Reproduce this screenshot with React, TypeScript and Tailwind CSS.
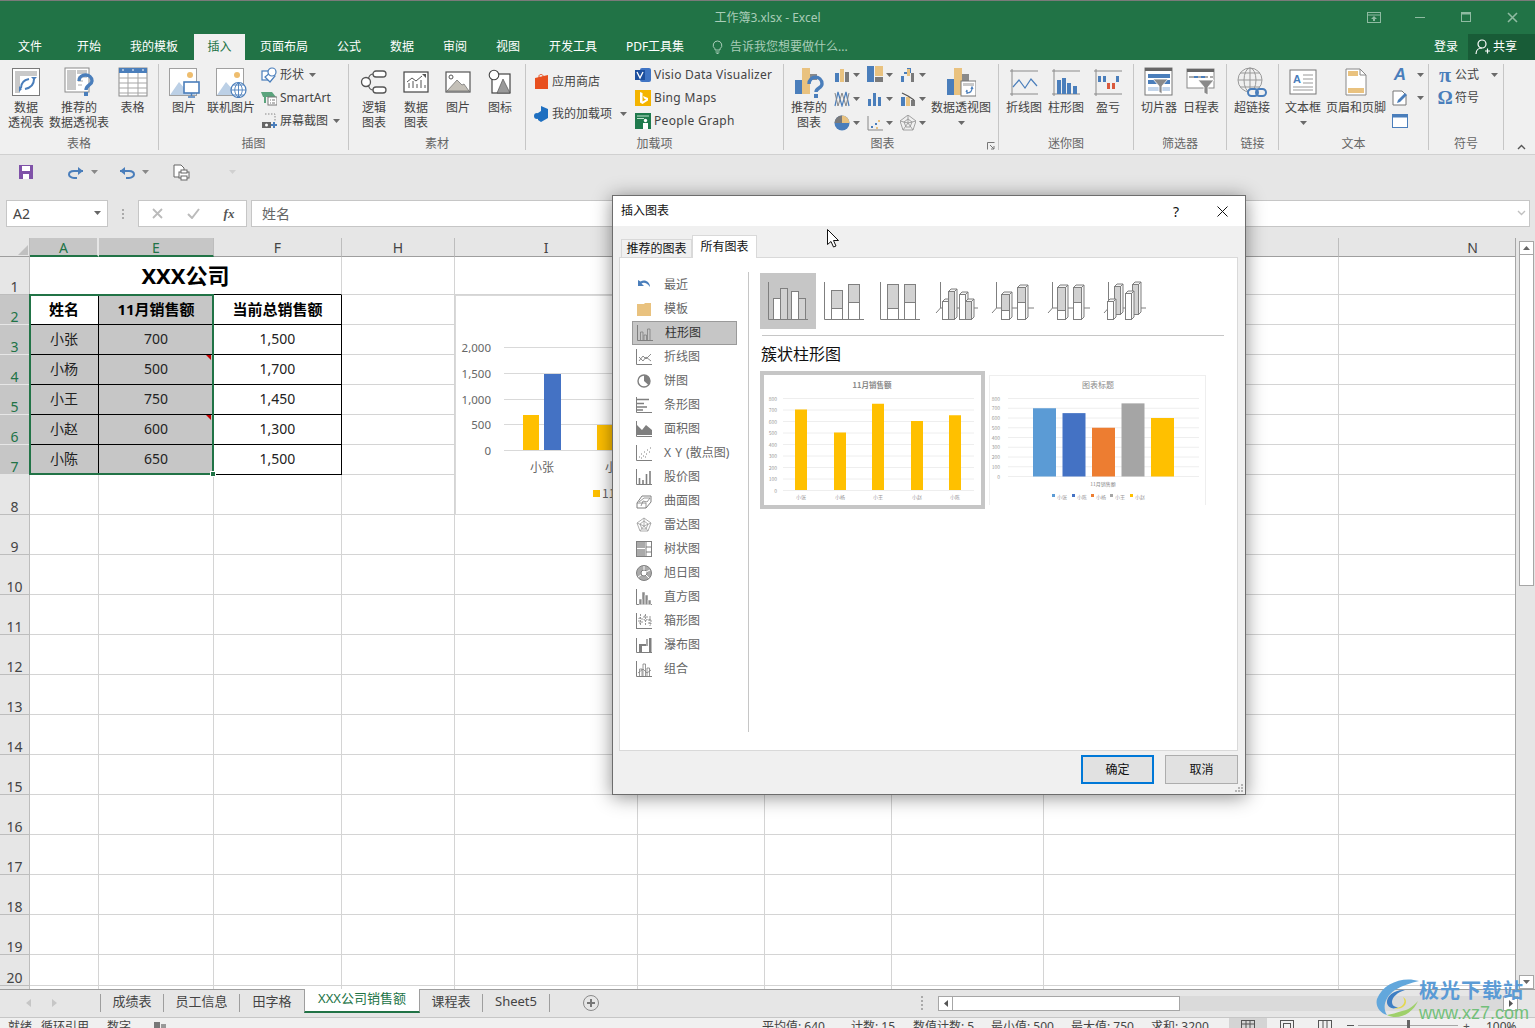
import type { ReactNode } from 'react';

const BLUE = '#4a7ebb';
const TAN = '#e9c27f';
const GRAY = '#7f7f7f';

const Caret = ({ color = '#6a6a6a' }: { color?: string }) => (
  <svg width="7" height="4" viewBox="0 0 7 4" className="shrink-0">
    <path d="M0 0h7L3.5 4z" fill={color} />
  </svg>
);

const Ico = ({ w = 16, h = 16, vb, children }: { w?: number; h?: number; vb?: string; children: ReactNode }) => (
  <svg width={w} height={h} viewBox={vb ?? `0 0 ${w} ${h}`} className="shrink-0" fill="none">
    {children}
  </svg>
);

/* ---------- ribbon: large icons ---------- */
const PivotIcon = () => (
  <Ico w={30} h={30}>
    <rect x="1.5" y="1.5" width="27" height="27" fill="#fff" stroke="#7a7a7a" />
    <rect x="4" y="4" width="22" height="5" fill="#c9c9c9" />
    <rect x="4" y="9" width="5" height="17" fill="#c9c9c9" />
    <path d="M23 12c0 6-4 9-9 10M10 21c0-5 3-8 8-9" stroke={BLUE} strokeWidth="2" />
    <path d="M20 10l3 3 3-3M8 19l3 3-3 3" fill={BLUE} />
  </Ico>
);
const RecPivotIcon = () => (
  <Ico w={30} h={30}>
    <rect x="1" y="1" width="24" height="24" fill="#fff" stroke="#8a8a8a" />
    <rect x="3" y="3" width="9" height="20" fill="#c9c9c9" />
    <rect x="13" y="3" width="10" height="4" fill="#c9c9c9" />
    <path d="M14 10h9M14 14h5M14 18h4" stroke="#aaa" />
    <path d="M15 14c0-8 13-8 13 0 0 4-6 4-6 9" stroke={BLUE} strokeWidth="3.4" />
    <rect x="20" y="25" width="4" height="4" fill={BLUE} />
  </Ico>
);
const TableIcon = () => (
  <Ico w={30} h={30}>
    <rect x="1" y="1" width="28" height="28" fill="#fff" stroke="#8a8a8a" />
    <rect x="1" y="1" width="28" height="5" fill={BLUE} />
    <path d="M1 11h28M1 16h28M1 21h28M1 26h28M10 6v23M20 6v23" stroke="#a5a5a5" />
    <path d="M4 3h2M14 3h2M24 3h2" stroke="#fff" />
  </Ico>
);
const PicBase = ({ children }: { children: ReactNode }) => (
  <Ico w={31} h={31}>
    <rect x="0.5" y="1.5" width="27" height="27" fill="#fff" stroke="#a0a0a0" />
    <circle cx="21" cy="8" r="3" fill="#eebd6e" />
    <path d="M1 28l9-13 7 8 4-4 6 9z" fill="#bcd0e6" />
    {children}
  </Ico>
);
const PictureIcon = () => (
  <PicBase>
    <rect x="15" y="15" width="15" height="11" fill="#fff" stroke={BLUE} strokeWidth="1.6" />
    <path d="M22.5 26v3M19 30h7" stroke={BLUE} strokeWidth="1.4" />
  </PicBase>
);
const OnlinePicIcon = () => (
  <PicBase>
    <circle cx="22.5" cy="23" r="7.5" fill="#fff" stroke={BLUE} strokeWidth="1.2" />
    <path d="M15 23h15M22.5 15.5v15M17 18h11M17 28h11M22.5 15.5c-5 4-5 11 0 15M22.5 15.5c5 4 5 11 0 15" stroke={BLUE} strokeWidth="0.9" />
  </PicBase>
);
const LogicIcon = () => (
  <Ico w={28} h={26}>
    <circle cx="6" cy="13" r="4.5" fill="#fff" stroke="#555" strokeWidth="1.3" />
    <rect x="13" y="2" width="13" height="6" rx="3" fill="#fff" stroke="#555" strokeWidth="1.3" />
    <rect x="13" y="18" width="13" height="6" rx="3" fill="#fff" stroke="#555" strokeWidth="1.3" />
    <path d="M13 5c-4 0-4 4-5 5M13 21c-4 0-4-4-5-5" stroke="#555" strokeWidth="1.2" />
  </Ico>
);
const DataChartIcon = () => (
  <Ico w={26} h={22}>
    <rect x="1" y="1" width="24" height="20" fill="#fff" stroke="#444" strokeWidth="1.2" />
    <path d="M6 17v-5M10 17v-7M14 17v-4M18 17V9M22 17v-3" stroke="#555" />
    <path d="M4 11l5-4 4 3 6-5" stroke="#555" />
    <path d="M19 3h4v4z" fill="#555" />
  </Ico>
);
const MatPicIcon = () => (
  <Ico w={26} h={22}>
    <rect x="1" y="1" width="24" height="20" fill="#fff" stroke="#555" strokeWidth="1.2" />
    <circle cx="6" cy="6" r="2" fill="#fff" stroke="#555" />
    <path d="M2 20l10-11 5 5 2-1 5 7z" fill="#c4c0b8" stroke="#555" strokeWidth="0.6" />
  </Ico>
);
const MatIconIcon = () => (
  <Ico w={24} h={27}>
    <rect x="4" y="5" width="18" height="19" fill="#fff" stroke="#444" strokeWidth="1.2" />
    <circle cx="6" cy="6" r="4.8" fill="#fff" stroke="#444" strokeWidth="1.1" />
    <path d="M15 10l7 14H9z" fill="#999" stroke="#444" strokeWidth="0.6" />
  </Ico>
);
const RecChartIcon = () => (
  <Ico w={30} h={32}>
    <rect x="1" y="14" width="7" height="14" fill={BLUE} />
    <rect x="8" y="2" width="8" height="26" fill={TAN} />
    <rect x="16" y="8" width="7" height="6" fill="#8a8a8a" />
    <path d="M15 18c0-9 13-9 13 0 0 4-6 4-6 8" stroke={BLUE} strokeWidth="3.4" />
    <rect x="20" y="28" width="4" height="4" fill={BLUE} />
  </Ico>
);
const PivotChartIcon = () => (
  <Ico w={30} h={30}>
    <rect x="1" y="12" width="7" height="16" fill={BLUE} />
    <rect x="8" y="1" width="8" height="27" fill={TAN} />
    <rect x="16" y="7" width="7" height="9" fill="#8a8a8a" />
    <rect x="15" y="14" width="15" height="15" fill="#fff" stroke="#777" />
    <rect x="17" y="16" width="11" height="3" fill="#c9c9c9" />
    <path d="M26 21c0 3-2 5-5 5M20 25l1-2v4M25 22l1-2 1 2" stroke={BLUE} strokeWidth="1.2" />
  </Ico>
);
const SparkBase = ({ children }: { children: ReactNode }) => (
  <Ico w={30} h={27}>
    <path d="M1 2h28M1 25h28M3 0v27" stroke="#8a8a8a" />
    {children}
  </Ico>
);
const SparkLine = () => (
  <SparkBase>
    <path d="M4 18l6-7 6 8 6-9 6 7" stroke={BLUE} strokeWidth="1.2" />
  </SparkBase>
);
const SparkBars = () => (
  <SparkBase>
    <path d="M6 11h4v14H6zM11 9h4v16h-4zM16 14h4v11h-4zM22 17h4v8h-4z" fill={BLUE} />
  </SparkBase>
);
const SparkWin = () => (
  <SparkBase>
    <path d="M5 7h3v6H5zM10 7h3v6h-3zM23 7h3v6h-3z" fill={BLUE} />
    <path d="M14 14h3v6h-3zM19 14h3v6h-3z" fill="#d9593c" />
  </SparkBase>
);
const SlicerIcon = () => (
  <Ico w={30} h={30}>
    <rect x="1" y="1" width="27" height="27" fill="#fff" stroke="#777" />
    <rect x="1" y="1" width="27" height="3" fill="#666" />
    <rect x="4" y="7" width="22" height="4" fill={BLUE} />
    <rect x="4" y="13" width="22" height="4" fill={BLUE} />
    <rect x="4" y="20" width="22" height="4" fill="#c3d5ea" />
    <path d="M9 12h15l-6 7v8l-3-2v-6z" fill="#8a8a8a" stroke="#fff" strokeWidth="0.8" />
  </Ico>
);
const TimelineIcon = () => (
  <Ico w={30} h={28}>
    <rect x="1" y="1" width="27" height="19" fill="#fff" stroke="#888" />
    <rect x="1" y="1" width="27" height="3" fill="#666" />
    <path d="M3 9h5M11 9h4M18 9h4M24 9h3" stroke="#aaa" strokeWidth="2" />
    <path d="M8 9h4M15 9h4" stroke={BLUE} strokeWidth="2" />
    <path d="M12 12h16l-6 7v8l-4-2v-6z" fill="#8a8a8a" stroke="#fff" strokeWidth="0.8" />
  </Ico>
);
const LinkIcon = () => (
  <Ico w={32} h={31}>
    <circle cx="14" cy="13" r="12" stroke="#999" />
    <ellipse cx="14" cy="13" rx="6" ry="12" stroke="#999" />
    <path d="M2 13h24M4 6h20M4 20h20M14 1v24" stroke="#999" />
    <rect x="12" y="22" width="10" height="7" rx="3.5" stroke={BLUE} strokeWidth="2" fill="#f0f0f0" />
    <rect x="20" y="22" width="10" height="7" rx="3.5" stroke={BLUE} strokeWidth="2" />
  </Ico>
);
const TextBoxIcon = () => (
  <Ico w={28} h={26}>
    <rect x="1" y="1" width="26" height="24" fill="#fff" stroke="#777" />
    <path d="M14 6h10M14 10h10M14 14h10M4 18h20M4 21h20" stroke="#999" />
    <text x="4" y="14" fontSize="11" fontWeight="700" fill={BLUE} fontFamily="Liberation Sans, sans-serif">A</text>
  </Ico>
);
const HeaderFooterIcon = () => (
  <Ico w={22} h={28}>
    <path d="M1 1h14l6 6v20H1z" fill="#fff" stroke="#888" />
    <path d="M15 1v6h6" stroke="#888" />
    <rect x="3" y="3" width="10" height="5" fill={TAN} />
    <rect x="3" y="20" width="16" height="5" fill={TAN} />
  </Ico>
);

/* ---------- ribbon: small icons ---------- */
const ShapeIcon = () => (
  <Ico>
    <rect x="1" y="4" width="9" height="9" fill="#fff" stroke={BLUE} strokeWidth="1.2" />
    <path d="M10 5l4 4-5 6-5-5z" fill="#fff" stroke={BLUE} strokeWidth="1.2" />
    <circle cx="11" cy="5" r="4" fill="#fff" stroke={BLUE} strokeWidth="1.2" />
  </Ico>
);
const SmartArtIcon = () => (
  <Ico>
    <path d="M0 2h11l4 5H2z" fill="#5aa37c" />
    <rect x="7" y="7" width="9" height="8" fill="#fff" stroke="#777" />
    <path d="M9 10h1M11 10h3M9 13h1M11 13h3" stroke="#777" />
    <path d="M3 7v6h2V7z" fill="#5aa37c" />
  </Ico>
);
const ScreenshotIcon = () => (
  <Ico>
    <path d="M4 1h10v7" stroke="#888" strokeDasharray="1.5 1.5" />
    <path d="M1 9h9v6H1z" fill="#666" />
    <circle cx="5.5" cy="12" r="1.5" fill="#fff" />
    <path d="M13 9v6M10 12h6" stroke={BLUE} strokeWidth="2" />
  </Ico>
);
const StoreIcon = () => (
  <Ico w={15} h={16}>
    <path d="M1 4l13-3v14H1z" fill="#e8501f" />
    <path d="M5 5V2c0-2 4-2 4 0v3" stroke="#e8501f" />
  </Ico>
);
const AddinIcon = () => (
  <Ico w={15} h={16}>
    <path d="M7 0l7 3v9l-7 4-3-2V7L7 5z" fill="#1e6fc0" />
    <circle cx="3" cy="10" r="3" fill="#1e6fc0" />
  </Ico>
);
const VisioIcon = () => (
  <Ico>
    <rect x="5" y="1" width="11" height="14" rx="2" fill="#3f74c4" />
    <rect x="0" y="3" width="10" height="10" fill="#1d4f9e" />
    <path d="M2 5l3 6 3-6" stroke="#fff" strokeWidth="1.3" />
  </Ico>
);
const BingIcon = () => (
  <Ico>
    <rect width="16" height="16" fill="#f4b400" />
    <path d="M5 2l2.5 1v8.5L11 9.5 9 8.5 8 6l5 2v2.5L7.5 14 5 12.5z" fill="#fff" />
  </Ico>
);
const PeopleIcon = () => (
  <Ico>
    <rect width="16" height="16" fill="#1f7a4d" />
    <path d="M2 3h12M2 5.5h7" stroke="#bfe3cf" />
    <circle cx="10.5" cy="7.5" r="1.7" fill="#fff" />
    <path d="M8 10h5v6H8z" fill="#fff" />
  </Ico>
);
const MiniColumn = () => (
  <Ico>
    <path d="M1 6h4v9H1z" fill={BLUE} />
    <path d="M6 2h4v13H6z" fill={TAN} />
    <path d="M11 5h4v10h-4z" fill="#7a7a7a" />
  </Ico>
);
const MiniTree = () => (
  <Ico w={16} h={17}>
    <rect width="7" height="16" fill={BLUE} />
    <rect x="8" width="8" height="10" fill={TAN} />
    <rect x="8" y="11" width="8" height="5" fill="#7a7a7a" />
  </Ico>
);
const MiniWater = () => (
  <Ico>
    <path d="M1 9h3v6H1z" fill={BLUE} />
    <path d="M4 5h3v2H4zM7 1h4v5H7z" fill={BLUE} />
    <path d="M11 6h3v9h-3z" fill="#7a7a7a" />
    <path d="M7 2h3v7H7z" fill={TAN} />
  </Ico>
);
const MiniLine = () => (
  <Ico>
    <path d="M1 15L4 1l4 14 4-14 3 14" stroke={BLUE} strokeWidth="1.2" />
    <path d="M1 2l3 13 4-13 4 13 3-13" stroke="#888" strokeWidth="1" />
  </Ico>
);
const MiniStat = () => (
  <Ico>
    <path d="M1 8h3v7H1zM6 2h3v13H6zM11 6h3v9h-3z" fill={BLUE} />
  </Ico>
);
const MiniCombo = () => (
  <Ico>
    <path d="M1 6h4v9H1z" fill={BLUE} />
    <path d="M6 6h4v9H6z" fill={TAN} />
    <path d="M11 9h4v6h-4z" fill="#7a7a7a" />
    <path d="M2 2l6 3 6 4" stroke="#555" strokeWidth="1.2" />
  </Ico>
);
const MiniPie = () => (
  <Ico>
    <circle cx="8" cy="8" r="7.5" fill={BLUE} />
    <path d="M8 8V.5A7.5 7.5 0 0 1 15.5 8z" fill={TAN} />
    <path d="M8 8H.5A7.5 7.5 0 0 1 8 .5z" fill="#7a7a7a" />
  </Ico>
);
const MiniScatter = () => (
  <Ico>
    <path d="M1 1v14h15" stroke="#888" />
    <path d="M4 11h2v2H4zM8 8h2v2H8z" fill={BLUE} />
    <path d="M11 5h2v2h-2zM9 12h2v2H9z" fill={TAN} />
  </Ico>
);
const MiniRadar = () => (
  <Ico>
    <path d="M8 0l8 6-3 9H3L0 6zM8 4l4 3-2 5H6L4 7zM8 0v8M0 6l8 2 8-2M3 15l5-7 5 7" stroke="#999" strokeWidth="0.9" />
  </Ico>
);
const WordArtIcon = () => (
  <span className="w-[16px] text-center font-['Liberation_Sans'] italic font-bold text-[17px] leading-[16px] text-[#4a7ebb]">A</span>
);
const SignIcon = () => (
  <Ico>
    <path d="M1 1h9l4 4v10H1z" fill="#fff" stroke="#777" />
    <path d="M5 13l1-3 7-7 2 2-7 7z" fill={BLUE} />
  </Ico>
);
const ObjectIcon = () => (
  <Ico>
    <rect x="0.5" y="1.5" width="15" height="13" fill="#fff" stroke={BLUE} />
    <rect x="0.5" y="1.5" width="15" height="3" fill={BLUE} />
  </Ico>
);

/* ---------- ribbon helpers ---------- */
const Big = ({ w, icon, lines, caret }: { w: string; icon: ReactNode; lines: string[]; caret?: boolean }) => (
  <div className={`flex flex-col items-center shrink-0 ${w}`}>
    <div className="h-[36px] flex items-center justify-center">{icon}</div>
    {lines.map((l) => (
      <div key={l} className="h-[15px] leading-[15px] whitespace-nowrap">{l}</div>
    ))}
    {caret && <div className="h-[15px] flex items-center"><Caret /></div>}
  </div>
);

const Small = ({ icon, label, caret, gap = 'gap-[3px]' }: { icon: ReactNode; label?: ReactNode; caret?: string; gap?: string }) => (
  <div className={`h-[23px] flex items-center whitespace-nowrap ${gap}`}>
    {icon}
    {label && <span>{label}</span>}
    {caret && <span className={caret}><Caret /></span>}
  </div>
);

const Group = ({ w, label, labelClass = '', children, after }: { w: string; label: string; labelClass?: string; children: ReactNode; after?: ReactNode }) => (
  <div className={`mt-[4px] h-[86px] shrink-0 flex flex-col border-r border-[#c6c6c6] ${w}`}>
    <div className="h-[72px] flex">{children}</div>
    <div className="h-[14px] flex items-center justify-between pt-px">
      <div className={`flex-1 leading-[14px] text-center text-[#666] ${labelClass}`}>{label}</div>
      {after}
    </div>
  </div>
);

const tabs = [
  { t: '文件', c: 'w-[60px]' },
  { t: '开始', c: 'w-[58px]' },
  { t: '我的模板', c: 'w-[72px]' },
  { t: '插入', c: 'w-[51px] ml-[4px] bg-[#f0f0f0] text-[#217346]' },
  { t: '页面布局', c: 'w-[78px]' },
  { t: '公式', c: 'w-[52px]' },
  { t: '数据', c: 'w-[54px]' },
  { t: '审阅', c: 'w-[52px]' },
  { t: '视图', c: 'w-[54px]' },
  { t: '开发工具', c: 'w-[76px]' },
  { t: 'PDF工具集', c: 'w-[88px]' },
];

const TitleBar = () => (
  <div className="h-[34px] bg-[#217346] border-t border-[#7a7a7a] flex items-center shrink-0">
    <div className="flex-1" />
    <div className="text-[12px] text-[#a9cdb8]">工作簿3.xlsx - Excel</div>
    <div className="flex-1 flex justify-end">
      <div className="w-[46px] flex justify-center">
        <Ico w={14} h={11}>
          <rect x="0.5" y="0.5" width="13" height="10" stroke="#8fbba2" />
          <path d="M0 3h14" stroke="#8fbba2" />
          <path d="M7 4l3 3H8v2H6V7H4z" fill="#8fbba2" />
        </Ico>
      </div>
      <div className="w-[46px] flex justify-center items-center">
        <div className="w-[10px] h-[1px] bg-[#8fbba2]" />
      </div>
      <div className="w-[46px] flex justify-center">
        <Ico w={11} h={11}>
          <rect x="0.5" y="0.5" width="9" height="9" stroke="#8fbba2" />
          <path d="M0 1.5h10" stroke="#8fbba2" strokeWidth="2" />
        </Ico>
      </div>
      <div className="w-[46px] flex justify-center">
        <Ico w={11} h={11}>
          <path d="M1 1l9 9M10 1l-9 9" stroke="#8fbba2" strokeWidth="1.6" />
        </Ico>
      </div>
    </div>
  </div>
);

const TabBar = () => (
  <div className="h-[26px] bg-[#217346] flex items-stretch shrink-0 text-[12px] text-white">
    {tabs.map((t) => (
      <div key={t.t} className={`flex items-center justify-center ${t.c}`}>{t.t}</div>
    ))}
    <div className="ml-[13px] flex items-center gap-[7px] text-[#a9cdb8]">
      <Ico w={11} h={14}>
        <path d="M5.5 1a4.3 4.3 0 0 0-2.5 7.8V10h5V8.8A4.3 4.3 0 0 0 5.5 1zM3.5 12h4M4.5 13.5h2" stroke="#a9cdb8" />
      </Ico>
      告诉我您想要做什么...
    </div>
    <div className="flex-1" />
    <div className="w-[60px] flex items-center pl-[26px]">登录</div>
    <div className="w-[67px] bg-[#185c37] flex items-center gap-[3px] pl-[7px]">
      <Ico w={15} h={16}>
        <circle cx="7" cy="5" r="4" stroke="#fff" strokeWidth="1.2" />
        <path d="M1 15c0-4 3-6 6-6M10 12h5M12.5 9.500v5" stroke="#fff" strokeWidth="1.2" />
      </Ico>
      共享
    </div>
  </div>
);

const Ribbon = () => (
  <div className="h-[95px] bg-[#f0f0f0] border-b border-[#d0d0d0] flex shrink-0 text-[12px] text-[#444]">
    <Group w="w-[159px]" label="表格">
      <Big w="w-[52px]" icon={<PivotIcon />} lines={['数据', '透视表']} />
      <Big w="w-[54px]" icon={<RecPivotIcon />} lines={['推荐的', '数据透视表']} />
      <Big w="w-[53px]" icon={<TableIcon />} lines={['表格']} />
    </Group>
    <Group w="w-[190px]" label="插图">
      <Big w="w-[50px]" icon={<PictureIcon />} lines={['图片']} />
      <Big w="w-[44px]" icon={<OnlinePicIcon />} lines={['联机图片']} />
      <div className="ml-[8px] -mt-px">
        <Small icon={<ShapeIcon />} label="形状" caret="ml-[2px]" />
        <Small icon={<SmartArtIcon />} label="SmartArt" />
        <Small icon={<ScreenshotIcon />} label="屏幕截图" caret="ml-[2px]" />
      </div>
    </Group>
    <Group w="w-[177px]" label="素材">
      <div className="w-[4px]" />
      <Big w="w-[42px]" icon={<LogicIcon />} lines={['逻辑', '图表']} />
      <Big w="w-[42px]" icon={<DataChartIcon />} lines={['数据', '图表']} />
      <Big w="w-[42px]" icon={<MatPicIcon />} lines={['图片']} />
      <Big w="w-[42px]" icon={<MatIconIcon />} lines={['图标']} />
    </Group>
    <Group w="w-[258px]" label="加载项">
      <div className="w-[109px] pl-[8px] pt-[6px] shrink-0">
        <Small icon={<StoreIcon />} label="应用商店" />
        <div className="h-[9px]" />
        <Small icon={<AddinIcon />} label="我的加载项" caret="ml-[5px]" />
      </div>
      <div className="-mt-px">
        <Small icon={<VisioIcon />} label={<span className="tracking-[0.25px]">Visio Data Visualizer</span>} />
        <Small icon={<BingIcon />} label={<span className="tracking-[0.35px]">Bing Maps</span>} />
        <Small icon={<PeopleIcon />} label={<span className="tracking-[0.35px]">People Graph</span>} />
      </div>
    </Group>
    <Group
      w="w-[215px]"
      label="图表"
      labelClass="pr-[6px]"
      after={
        <div className="mr-[3px] mt-[4px]">
          <Ico w={8} h={8}><path d="M.5 7.500v-7h7M3 3l4 4M7 4v3H4" stroke="#777" /></Ico>
        </div>
      }
    >
      <Big w="w-[50px]" icon={<RecChartIcon />} lines={['推荐的', '图表']} />
      <div className="grid grid-cols-[33px_33px_33px] -mt-px shrink-0">
        <Small icon={<MiniColumn />} caret="ml-0" />
        <Small icon={<MiniTree />} caret="ml-0" />
        <Small icon={<MiniWater />} caret="ml-0" />
        <Small icon={<MiniLine />} caret="ml-0" />
        <Small icon={<MiniStat />} caret="ml-0" />
        <Small icon={<MiniCombo />} caret="ml-0" />
        <Small icon={<MiniPie />} caret="ml-0" />
        <Small icon={<MiniScatter />} caret="ml-0" />
        <Small icon={<MiniRadar />} caret="ml-0" />
      </div>
      <Big w="w-[56px]" icon={<PivotChartIcon />} lines={['数据透视图']} caret />
    </Group>
    <Group w="w-[135px]" label="迷你图">
      <div className="w-[4px]" />
      <Big w="w-[42px]" icon={<SparkLine />} lines={['折线图']} />
      <Big w="w-[42px]" icon={<SparkBars />} lines={['柱形图']} />
      <Big w="w-[42px]" icon={<SparkWin />} lines={['盈亏']} />
    </Group>
    <Group w="w-[93px]" label="筛选器">
      <div className="w-[4px]" />
      <Big w="w-[42px]" icon={<SlicerIcon />} lines={['切片器']} />
      <Big w="w-[42px]" icon={<TimelineIcon />} lines={['日程表']} />
    </Group>
    <Group w="w-[52px]" label="链接">
      <Big w="w-[50px]" icon={<LinkIcon />} lines={['超链接']} />
    </Group>
    <Group w="w-[150px]" label="文本">
      <Big w="w-[48px]" icon={<TextBoxIcon />} lines={['文本框']} caret />
      <Big w="w-[58px]" icon={<HeaderFooterIcon />} lines={['页眉和页脚']} />
      <div className="ml-[7px] -mt-px">
        <Small icon={<WordArtIcon />} caret="ml-[6px]" />
        <Small icon={<SignIcon />} caret="ml-[6px]" />
        <Small icon={<ObjectIcon />} />
      </div>
    </Group>
    <Group w="w-[75px]" label="符号">
      <div className="pl-[8px] -mt-px">
        <Small gap="gap-[2px]" icon={<span className="w-[16px] text-center font-['Liberation_Serif'] font-bold text-[22px] leading-[16px] text-[#4a7ebb]">π</span>} label="公式" caret="ml-[10px]" />
        <Small gap="gap-[2px]" icon={<span className="w-[16px] text-center font-['Liberation_Serif'] font-bold text-[19px] leading-[16px] text-[#4a7ebb]">Ω</span>} label="符号" />
      </div>
    </Group>
    <div className="flex-1 flex justify-end items-end pb-[4px] pr-[9px]">
      <Ico w={9} h={6}>
        <path d="M1 5l3.500-3.500L8 5" stroke="#555" strokeWidth="1.4" />
      </Ico>
    </div>
  </div>
);

const QuickBar = () => (
  <div className="h-[43px] flex items-center shrink-0 pl-[19px] pb-[9px]">
    <Ico w={14} h={14}>
      <path d="M0 0h14v14H0z" fill="#7f52a8" />
      <rect x="3" y="1" width="8" height="5" fill="#fff" />
      <rect x="4" y="9" width="6" height="5" fill="#fff" />
    </Ico>
    <div className="ml-[35px] flex">
      <Ico w={16} h={13}>
        <path d="M15 5H6C2 5 1 7 1 8.500S3 12 6 12h3" stroke={BLUE} strokeWidth="2" />
        <path d="M10 1l5 4-5 4z" fill={BLUE} />
      </Ico>
    </div>
    <div className="ml-[7px] flex"><Caret color="#888" /></div>
    <div className="ml-[21px] flex">
      <Ico w={16} h={13}>
        <path d="M1 5h9c4 0 5 2 5 3.500S13 12 10 12H7" stroke={BLUE} strokeWidth="2" />
        <path d="M6 1L1 5l5 4z" fill={BLUE} />
      </Ico>
    </div>
    <div className="ml-[7px] flex"><Caret color="#888" /></div>
    <div className="ml-[24px] flex">
      <Ico w={17} h={17}>
        <path d="M1 1h7l3 3v9H1z" fill="#fff" stroke="#666" />
        <rect x="6" y="8" width="10" height="6" fill="#fff" stroke="#666" />
        <rect x="8" y="6" width="6" height="3" fill="#fff" stroke="#666" />
        <rect x="8" y="12" width="6" height="4" fill="#fff" stroke="#666" />
      </Ico>
    </div>
    <div className="ml-[39px] flex"><Caret color="#d0d0d0" /></div>
  </div>
);

const FormulaBar = () => (
  <div className="h-[27px] mt-[2px] flex shrink-0 pl-[6px] text-[14px] text-[#444]">
    <div className="w-[102px] bg-white border border-[#c6c6c6] flex items-center justify-between pl-[6px] pr-[6px] pb-px">
      A2
      <Caret color="#666" />
    </div>
    <div className="w-[30px] flex items-center justify-center">
      <div className="w-[2px] h-[10px] border-l-2 border-dotted border-[#aaa]" />
    </div>
    <div className="w-[109px] bg-white border border-[#c6c6c6] flex items-center">
      <div className="w-[36px] flex justify-center">
        <Ico w={11} h={11}><path d="M1 1l9 9M10 1l-9 9" stroke="#bbb" strokeWidth="1.8" /></Ico>
      </div>
      <div className="w-[37px] flex justify-center">
        <Ico w={13} h={11}><path d="M1 6l4 4 7-9" stroke="#bbb" strokeWidth="2" /></Ico>
      </div>
      <div className="w-[34px] text-center font-['Liberation_Serif'] italic font-bold text-[13px] text-[#555]">fx</div>
    </div>
    <div className="w-[1279px] ml-[4px] bg-white border border-[#c6c6c6] flex items-center justify-between pl-[10px] pr-[3px] pb-px text-[#666]">
      姓名
      <Ico w={9} h={6}><path d="M1 1l3.500 3.500L8 1" stroke="#c0c0c0" strokeWidth="1.4" /></Ico>
    </div>
  </div>
);

/* ---------- sheet ---------- */
const columns = [
  { k: 'A', sel: true, c: 'border-r-2 border-r-[#e6e6e6] text-[#217346] bg-[#c6c6c6] border-b-2 border-b-[#217346]' },
  { k: 'E', sel: true, c: 'text-[#217346] bg-[#c6c6c6] border-b-2 border-b-[#217346]' },
  { k: 'F', sel: false, c: '' },
  { k: 'H', sel: false, c: '' },
  { k: 'I', sel: false, c: '' },
  { k: 'J', sel: false, c: '' },
  { k: 'K', sel: false, c: '' },
  { k: 'L', sel: false, c: '' },
  { k: 'M', sel: false, c: '' },
  { k: 'N', sel: false, c: 'justify-end pr-[37px]' },
];

const people = [
  ['小张', '700', '1,500'],
  ['小杨', '500', '1,700'],
  ['小王', '750', '1,450'],
  ['小赵', '600', '1,300'],
  ['小陈', '650', '1,500'],
];

const Blank = () => <div className="border-r border-b border-[#d4d4d4]" />;

const RowHead = ({ n, sel }: { n?: number; sel?: boolean }) => (
  <div className={`border-b border-r flex items-end justify-center text-[14px] leading-[14px] ${sel ? 'bg-[#c6c6c6] text-[#217346] border-b-[#e6e6e6] border-r-[#217346]' : 'bg-[#e6e6e6] text-[#444] border-[#bdbdbd]'}`}>
    {n}
  </div>
);

const blanksAfterF = [0, 1, 2, 3, 4, 5, 6];

const Sheet = () => (
  <div className="relative w-[1516px] h-[751px] overflow-hidden border-r border-[#a6a6a6]">
    <div className="grid grid-cols-[30px_69px_115px_128px_113px_183px_127px_127px_152px_295px_177px] grid-rows-[19px_38px_repeat(6,30px)_repeat(12,40px)_31px_10px] h-full bg-white">
      <div className="bg-[#e6e6e6] border-b border-[#9e9e9e] border-r border-r-[#bdbdbd] flex items-end justify-end">
        <Ico w={12} h={12}><path d="M11 1v10H1z" fill="#c0c0c0" /></Ico>
      </div>
      {columns.map((c) => (
        <div key={c.k} className={`flex items-center justify-center pt-[2px] text-[14px] leading-[16px] border-b border-r border-b-[#9e9e9e] border-r-[#bdbdbd] ${c.sel ? '' : 'bg-[#e6e6e6] text-[#444]'} ${c.c}`}>
          {c.k}
        </div>
      ))}

      <RowHead n={1} />
      <div className="col-span-3 border-r border-b border-b-black border-r-[#d4d4d4] flex items-center justify-center pb-px text-[22px] font-bold text-black">
        XXX公司
      </div>
      {blanksAfterF.map((i) => <Blank key={`r1-${i}`} />)}

      <RowHead n={2} sel />
      <div className="bg-white border-r border-b border-black flex items-center justify-center pb-px text-[15px] font-bold text-black">姓名</div>
      <div className="bg-[#c6c6c6] border-r border-b border-black flex items-center justify-center pb-px text-[15px] font-bold text-black">11月销售额</div>
      <div className="border-r border-b border-black flex items-center justify-center pb-px text-[15px] font-bold text-black">当前总销售额</div>
      {blanksAfterF.map((i) => <Blank key={`r2-${i}`} />)}

      {people.map((p, r) => (
        <div key={p[0]} className="contents">
          <RowHead n={r + 3} sel />
          <div className="bg-[#c6c6c6] border-r border-b border-black flex items-center justify-center pb-[2px] text-[14px] text-[#222]">{p[0]}</div>
          <div className="relative bg-[#c6c6c6] border-r border-b border-black flex items-center justify-center pb-[2px] text-[14px] text-[#222]">
            {p[1]}
            {(r === 1 || r === 3) && (
              <div className="absolute top-0 right-[2px] w-0 h-0 border-t-[5px] border-l-[5px] border-t-[#c00000] border-l-transparent" />
            )}
          </div>
          <div className="border-r border-b border-black flex items-center justify-center pb-[2px] text-[14px] text-[#222]">{p[2]}</div>
          {blanksAfterF.map((i) => <Blank key={`r${r}-${i}`} />)}
        </div>
      ))}

      {[8, 9, 10, 11, 12, 13, 14, 15, 16, 17, 18, 19, 20, undefined].map((n) => (
        <div key={n ?? 'end'} className="contents">
          <RowHead n={n} />
          {columns.map((c) => <Blank key={`${n}-${c.k}`} />)}
        </div>
      ))}
    </div>

    {/* selection outline over A2:E7 */}
    <div className="absolute left-[29px] top-[56px] w-[185px] h-[181px] border-2 border-[#217346] pointer-events-none">
      <div className="absolute -right-[4px] -bottom-[4px] w-[6px] h-[6px] bg-[#217346] border border-white" />
    </div>

    {/* floating chart behind the dialog */}
    <div className="absolute left-[455px] top-[57px] w-[300px] h-[220px] bg-white border border-[#d9d9d9]">
      <svg width="300" height="220" viewBox="456 296 300 220" className="block">
        {[347, 373, 399, 424, 450].map((y) => (
          <path key={y} d={`M504 ${y}.5H756`} stroke="#d9d9d9" />
        ))}
        {[['2,000', 352], ['1,500', 378], ['1,000', 404], ['500', 429], ['0', 455]].map(([t, y]) => (
          <text key={t} x="491" y={y} textAnchor="end" fontSize="11.500" fill="#666" fontFamily="Noto Sans, sans-serif">{t}</text>
        ))}
        <rect x="523" y="415" width="16" height="35" fill="#ffc000" />
        <rect x="544" y="374" width="17" height="76" fill="#4472c4" />
        <rect x="597" y="425" width="16" height="25" fill="#ffc000" />
        <text x="542" y="472" textAnchor="middle" fontSize="12" fill="#666" fontFamily="Noto Sans CJK SC, sans-serif">小张</text>
        <text x="605" y="472" fontSize="12" fill="#666" fontFamily="Noto Sans CJK SC, sans-serif">小杨</text>
        <rect x="593" y="490" width="7" height="7" fill="#ffc000" />
        <text x="602" y="498" fontSize="12" fill="#666" fontFamily="Noto Sans CJK SC, sans-serif">11月销售额</text>
      </svg>
    </div>
  </div>
);

const VScroll = () => (
  <div className="ml-[3px] w-[15px] h-[751px] flex flex-col">
    <div className="h-[14px] bg-white border border-[#a6a6a6] flex items-center justify-center mt-[3px]">
      <Ico w={7} h={4}><path d="M0 4h7L3.500 0z" fill="#666" /></Ico>
    </div>
    <div className="h-[331px] bg-white border border-[#a6a6a6] border-t-0" />
    <div className="flex-1" />
    <div className="h-[14px] bg-white border border-[#a6a6a6] flex items-center justify-center">
      <Caret color="#666" />
    </div>
  </div>
);

/* ---------- bottom ---------- */
const sheetTabs = [
  { t: '成绩表', c: 'w-[63px] border-r border-[#9e9e9e] mt-[4px] mb-[5px]' },
  { t: '员工信息', c: 'w-[76px] border-r border-[#9e9e9e] mt-[4px] mb-[5px]' },
  { t: '田字格', c: 'w-[64px] mt-[4px] mb-[5px]' },
  { t: 'XXX公司销售额', c: 'w-[116px] bg-white text-[#217346] border-x border-[#9e9e9e] border-b-2 border-b-[#217346] -mt-px mb-[4px]' },
  { t: '课程表', c: 'w-[63px] border-r border-[#9e9e9e] mt-[4px] mb-[5px]' },
  { t: 'Sheet5', c: 'w-[67px] border-r border-[#9e9e9e] mt-[4px] mb-[5px]' },
];

const SheetTabs = () => (
  <div className="h-[28px] bg-[#e6e6e6] border-t border-[#9e9e9e] flex shrink-0 text-[13px] text-[#444]">
    <div className="w-[101px] flex items-center gap-[21px] pl-[26px] border-r border-[#9e9e9e] mt-[4px] mb-[5px]">
      <Ico w={5} h={8}><path d="M5 0v8L0 4z" fill="#c6c6c6" /></Ico>
      <Ico w={5} h={8}><path d="M0 0v8l5-4z" fill="#c6c6c6" /></Ico>
    </div>
    {sheetTabs.map((t) => (
      <div key={t.t} className={`flex items-center justify-center whitespace-nowrap pb-[2px] ${t.c}`}>{t.t}</div>
    ))}
    <div className="ml-[33px] mt-[5px] w-[16px] h-[16px] rounded-full border border-[#8a8a8a] flex items-center justify-center">
      <Ico w={8} h={8}><path d="M4 0v8M0 4h8" stroke="#777" strokeWidth="2" /></Ico>
    </div>
    <div className="w-[322px]" />
    <div className="w-[3px] h-[14px] mt-[6px] border-l-2 border-dotted border-[#aaa]" />
    <div className="ml-[14px] mt-[6px] w-[15px] h-[15px] bg-white border border-[#a6a6a6] flex items-center justify-center">
      <Ico w={4} h={7}><path d="M4 0v7L0 3.500z" fill="#555" /></Ico>
    </div>
    <div className="w-[227px] h-[15px] mt-[6px] bg-white border border-l-0 border-[#a6a6a6]" />
    <div className="w-[323px] h-[15px] mt-[6px] bg-[#dadada]" />
    <div className="w-[15px] h-[15px] mt-[6px] bg-white border border-[#a6a6a6] flex items-center justify-center">
      <Ico w={4} h={7}><path d="M0 0v7l4-3.500z" fill="#555" /></Ico>
    </div>
  </div>
);

const StatusBar = () => (
  <div className="h-[11px] bg-[#f0f0f0] border-t border-[#c6c6c6] flex shrink-0 text-[12px] leading-[14px] text-[#444] overflow-hidden whitespace-nowrap">
    <div className="w-[41px] pl-[8px] pt-[2px]">就绪</div>
    <div className="w-[66px] pt-[2px]">循环引用</div>
    <div className="w-[47px] pt-[2px]">数字</div>
    <div className="w-[608px] pt-[3px]">
      <Ico w={12} h={8}><rect x="0" y="1" width="6" height="6" fill="#777" /><rect x="7" y="3" width="5" height="5" fill="#999" /></Ico>
    </div>
    <div className="w-[89px] pt-[2px]">平均值: 640</div>
    <div className="w-[62px] pt-[2px]">计数: 15</div>
    <div className="w-[78px] pt-[2px]">数值计数: 5</div>
    <div className="w-[80px] pt-[2px]">最小值: 500</div>
    <div className="w-[80px] pt-[2px]">最大值: 750</div>
    <div className="w-[78px] pt-[2px]">求和: 3200</div>
    <div className="w-[38px] bg-[#d4d4d4] flex justify-center pt-[2px]">
      <Ico w={14} h={12}><rect x="0.5" y="0.5" width="13" height="12" stroke="#555" /><path d="M0 4h14M5 0v12M9 0v12" stroke="#555" /></Ico>
    </div>
    <div className="w-[39px] flex justify-center pt-[2px]">
      <Ico w={14} h={12}><rect x="0.5" y="0.5" width="13" height="12" stroke="#555" /><rect x="3.500" y="3.500" width="7" height="8" stroke="#555" /></Ico>
    </div>
    <div className="w-[37px] flex justify-center pt-[2px]">
      <Ico w={14} h={12}><rect x="0.5" y="0.5" width="13" height="12" stroke="#555" /><path d="M5 0v12M9 0v12" stroke="#555" /></Ico>
    </div>
    <div className="w-[15px] pt-[7px] pl-[4px]"><div className="w-[7px] h-px bg-[#555]" /></div>
    <div className="relative w-[100px] h-px mt-[7px] bg-[#a6a6a6]">
      <div className="absolute left-[49px] -top-[5px] w-[3px] h-[10px] bg-[#666]" />
    </div>
    <div className="w-[28px] pl-[5px] text-[#555] pt-[2px]">+</div>
    <div className="pt-[2px]">100%</div>
  </div>
);

/* ---------- dialog ---------- */
const S = GRAY;
const sideItems: { t: string; active?: boolean; icon: ReactNode }[] = [
  { t: '最近', icon: <Ico><path d="M2 3v6h6L5.500 6.500C8 5 11 6 14 10c0-5-5-8-9.500-5.500z" fill={BLUE} /></Ico> },
  { t: '模板', icon: <Ico><path d="M1 3h7l1-1h6v13H1z" fill={TAN} /></Ico> },
  { t: '柱形图', active: true, icon: <Ico><path d="M.5 0v15.500H16" stroke={S} /><path d="M3.500 7h2.500v8.500H3.500zM7 10h2.500v5.500H7zM10.500 4h2.500v11.500h-2.500z" stroke={S} strokeWidth="0.8" /></Ico> },
  { t: '折线图', icon: <Ico><path d="M.5 0v15.500H16" stroke={S} /><path d="M3 12l4-5 3 3 5-5M3 8l4 4 3-4 5 4" stroke={S} strokeWidth="0.9" /></Ico> },
  { t: '饼图', icon: <Ico><circle cx="8" cy="8" r="6" stroke={S} strokeWidth="1.4" /><path d="M8 8V2a6 6 0 0 1 6 6l-1.500 4z" fill={S} /></Ico> },
  { t: '条形图', icon: <Ico><path d="M.5 0v15.500H16" stroke={S} /><path d="M1 2.500h12M1 6.500h7M1 10h10M1 13h6" stroke={S} strokeWidth="1.4" /></Ico> },
  { t: '面积图', icon: <Ico><path d="M.5 0v15.500H16" stroke={S} /><path d="M1 4l5 5 4-5 6 5v5H1z" fill={S} /></Ico> },
  { t: 'X Y (散点图)', icon: <Ico><path d="M.5 0v15.500H16" stroke={S} /><path d="M3 12h1M5 9h1M7 11h1M8 7h1M10 9h1M11 5h1M13 7h1M14 3h1M5 13h1M9 12h1" stroke={S} strokeDasharray="1 1" /></Ico> },
  { t: '股价图', icon: <Ico><path d="M.5 0v15.500H16" stroke={S} /><path d="M3.500 9v6M7 11v4M10.500 5v10M14 2v13" stroke={S} strokeWidth="1.6" /></Ico> },
  { t: '曲面图', icon: <Ico><path d="M1 10l5-7h9v6l-5 6H1z" stroke={S} /><path d="M3 9l5-4h6M5 13l2-5 4 1 3-4M1 10h9v5" stroke={S} strokeWidth="0.8" /></Ico> },
  { t: '雷达图', icon: <Ico><path d="M8 1l7 5-3 8H4L1 6zM8 4l4 3-2 5H6L4 7zM8 1v8M1 6l7 3 7-3M4 14l4-5 4 5" stroke="#999" strokeWidth="0.8" /></Ico> },
  { t: '树状图', icon: <Ico><rect x="0.5" y="0.5" width="15" height="15" stroke={S} /><rect x="1" y="1" width="8" height="6" fill="#aaa" /><rect x="1" y="8" width="8" height="7" fill="#aaa" /><path d="M10 0v16M10 6h6M10 11h6" stroke={S} /></Ico> },
  { t: '旭日图', icon: <Ico><circle cx="8" cy="8" r="7.500" fill="#aaa" stroke={S} /><circle cx="8" cy="8" r="3" fill="#fff" stroke={S} /><path d="M8 1v4M2 12l3-2M13 13l-3-3M14 5l-4 2" stroke="#fff" /></Ico> },
  { t: '直方图', icon: <Ico><path d="M.5 0v15.500H16" stroke={S} /><path d="M3 10h3v5.500H3zM6 3h3v12.500H6zM9 6h3v9.500H9zM12 11h3v4.500h-3z" fill="#8a8a8a" stroke="#fff" strokeWidth="0.5" /></Ico> },
  { t: '箱形图', icon: <Ico><path d="M0 15.500h16M.5 0v15" stroke={S} /><path d="M3 5h3v5H3zM8 3h3v4H8zM13 6h2v5h-2zM4.500 1v11M9.500 1v11M14 3v10" stroke={S} strokeWidth="0.8" strokeDasharray="2 1" /></Ico> },
  { t: '瀑布图', icon: <Ico><path d="M.5 1v14.500H16" stroke={S} /><path d="M3 7h3v8H3z" fill={S} /><path d="M6 7h4v2H6z" fill={S} /><path d="M10 2h2v7h-2z" fill="#aaa" /><path d="M13 1h2.500v14H13z" fill={S} /></Ico> },
  { t: '组合', icon: <Ico><path d="M.5 0v15.500H16" stroke={S} /><path d="M3.500 8h2.500v7.500H3.500zM7 3h2.500v12.500H7zM11 7h2.500v8.500H11z" stroke={S} strokeWidth="0.8" /><path d="M2 12l5-4 4 4 4-3" stroke={S} strokeWidth="0.8" /></Ico> },
];

const L = GRAY;
const Flat = ({ x, top, split, w = 12 }: { x: number; top: number; split?: number; w?: number }) => (
  <>
    <rect x={x + 0.5} y={top + 0.5} width={w} height={46 - top} fill="#d2d2d2" stroke={L} />
    {split !== undefined && <rect x={x + 0.5} y={split + 0.5} width={w} height={46 - split} fill="#fff" stroke={L} />}
  </>
);
const Box3D = ({ x, top, bottom, w, fill }: { x: number; top: number; bottom: number; w: number; fill: string }) => (
  <>
    <path d={`M${x} ${top}l2.500-2.500h${w}l-2.500 2.500zM${x + w} ${top}l2.500-2.500V${bottom - 2.5}L${x + w} ${bottom}z`} fill="#f4f4f4" stroke={L} />
    <rect x={x} y={top} width={w} height={bottom - top} fill={fill} stroke={L} />
  </>
);
const Axis = ({ d3 }: { d3?: boolean }) =>
  d3 ? (
    <path d="M12.500 9v26M8 40l4.500-5H50" stroke={L} fill="none" />
  ) : (
    <path d="M8.500 9v37.500H48" stroke={L} fill="none" />
  );

const Tile = ({ active, children }: { active?: boolean; children: ReactNode }) => (
  <div className={`w-[56px] h-[56px] shrink-0 ${active ? 'bg-[#c6c6c6]' : ''}`}>
    <svg width="56" height="56" viewBox="0 0 56 56" className="block">{children}</svg>
  </div>
);

const ChartTiles = () => (
  <div className="flex">
    <Tile active>
      <Axis />
      <rect x="13.500" y="25.500" width="7" height="21" fill="#fff" stroke={L} />
      <rect x="20.500" y="15.500" width="7" height="31" fill="#d2d2d2" stroke={L} />
      <rect x="31.500" y="18.500" width="7" height="28" fill="#fff" stroke={L} />
      <rect x="38.500" y="25.500" width="7" height="21" fill="#d2d2d2" stroke={L} />
    </Tile>
    <Tile><Axis /><Flat x={15} top={17} split={35} w={11} /><Flat x={32} top={11} split={29} w={11} /></Tile>
    <Tile><Axis /><Flat x={15} top={11} split={35} w={11} /><Flat x={32} top={11} split={29} w={11} /></Tile>
    <Tile>
      <Axis d3 />
      <Box3D x={14.500} top={28.500} bottom={46.500} w={6} fill="#fff" />
      <Box3D x={20.500} top={18.500} bottom={46.500} w={6} fill="#d2d2d2" />
      <Box3D x={31.500} top={21.500} bottom={46.500} w={6} fill="#fff" />
      <Box3D x={37.500} top={28.500} bottom={46.500} w={6} fill="#d2d2d2" />
    </Tile>
    <Tile>
      <Axis d3 />
      <Box3D x={17.500} top={21.500} bottom={46.500} w={8} fill="#d2d2d2" />
      <rect x="17.500" y="37.500" width="8" height="9" fill="#fff" stroke={L} />
      <Box3D x={33.500} top={14.500} bottom={46.500} w={8} fill="#d2d2d2" />
      <rect x="33.500" y="29.500" width="8" height="17" fill="#fff" stroke={L} />
    </Tile>
    <Tile>
      <Axis d3 />
      <Box3D x={17.500} top={14.500} bottom={46.500} w={8} fill="#d2d2d2" />
      <rect x="17.500" y="37.500" width="8" height="9" fill="#fff" stroke={L} />
      <Box3D x={33.500} top={14.500} bottom={46.500} w={8} fill="#d2d2d2" />
      <rect x="33.500" y="29.500" width="8" height="17" fill="#fff" stroke={L} />
    </Tile>
    <Tile>
      <Axis d3 />
      <Box3D x={18.500} top={13.500} bottom={41.500} w={6} fill="#d2d2d2" />
      <Box3D x={36.500} top={11.500} bottom={41.500} w={6} fill="#d2d2d2" />
      <Box3D x={11.500} top={28.500} bottom={46.500} w={6} fill="#fff" />
      <Box3D x={29.500} top={20.500} bottom={46.500} w={6} fill="#fff" />
    </Tile>
  </div>
);

const AXIS = ['800', '700', '600', '500', '400', '300', '200', '100', '0'];
const PreviewOne = () => {
  const bars = [
    { x: 795, v: 700, n: '小张' },
    { x: 834, v: 500, n: '小杨' },
    { x: 872, v: 750, n: '小王' },
    { x: 911, v: 600, n: '小赵' },
    { x: 949, v: 650, n: '小陈' },
  ];
  return (
    <div className="w-[225px] h-[138px] border-4 border-[#c6c6c6] shrink-0">
      <svg width="217" height="130" viewBox="764 375 217 130" className="block" fontFamily="Noto Sans CJK SC, sans-serif">
        <text x="872" y="388" textAnchor="middle" fontSize="7.500" fontWeight="700" fill="#8a8a8a">11月销售额</text>
        {AXIS.map((t, i) => (
          <g key={t}>
            <path d={`M783 ${398.5 + i * 11.5}H974`} stroke="#eeeeee" />
            <text x="777" y={400.5 + i * 11.5} textAnchor="end" fontSize="5" fill="#999">{t}</text>
          </g>
        ))}
        {bars.map((b) => (
          <g key={b.x}>
            <rect x={b.x} y={490 - b.v * 0.115} width="12" height={b.v * 0.115} fill="#ffc000" />
            <text x={b.x + 6} y="499" textAnchor="middle" fontSize="5" fill="#999">{b.n}</text>
          </g>
        ))}
      </svg>
    </div>
  );
};

const PreviewTwo = () => {
  const bars = [
    { x: 1033, v: 700, c: '#5b9bd5' },
    { x: 1062.5, v: 650, c: '#4472c4' },
    { x: 1092, v: 500, c: '#ed7d31' },
    { x: 1121.5, v: 750, c: '#a5a5a5' },
    { x: 1151, v: 600, c: '#ffc000' },
  ];
  const legend = [
    { x: 1052, c: '#5b9bd5', n: '小张' },
    { x: 1072, c: '#4472c4', n: '小陈' },
    { x: 1091, c: '#ed7d31', n: '小杨' },
    { x: 1110, c: '#a5a5a5', n: '小王' },
    { x: 1130, c: '#ffc000', n: '小赵' },
  ];
  return (
    <div className="w-[217px] h-[130px] mt-[4px] ml-[4px] border border-b-0 border-[#eeeeee] shrink-0">
      <svg width="215" height="129" viewBox="990 376 215 129" className="block" fontFamily="Noto Sans CJK SC, sans-serif">
        <text x="1098" y="388" textAnchor="middle" fontSize="8" fill="#8a8a8a">图表标题</text>
        {AXIS.map((t, i) => (
          <g key={t}>
            <path d={`M1008 ${398.5 + i * 9.75}H1199`} stroke="#eeeeee" />
            <text x="1000" y={400.5 + i * 9.75} textAnchor="end" fontSize="5" fill="#999">{t}</text>
          </g>
        ))}
        {bars.map((b) => (
          <rect key={b.x} x={b.x} y={476.5 - b.v * 0.0975} width="23" height={b.v * 0.0975} fill={b.c} />
        ))}
        <text x="1103" y="486" textAnchor="middle" fontSize="5" fill="#888">11月销售额</text>
        {legend.map((l) => (
          <g key={l.x}>
            <rect x={l.x} y="494" width="3" height="3" fill={l.c} />
            <text x={l.x + 5} y="498.500" fontSize="5" fill="#999">{l.n}</text>
          </g>
        ))}
      </svg>
    </div>
  );
};

const Dialog = () => (
  <div className="absolute left-[612px] top-[195px] w-[634px] h-[600px] bg-[#f0f0f0] border border-[#6d6d6d] shadow-[0_2px_18px_rgba(0,0,0,0.45)] flex flex-col text-[12px] text-[#222]">
    <div className="h-[30px] bg-white flex items-center pl-[8px] shrink-0 text-[#111]">
      插入图表
      <div className="flex-1" />
      <span className="text-[14px] w-[46px] text-center">?</span>
      <div className="w-[46px] flex justify-center pl-[1px]">
        <Ico w={11} h={11}><path d="M.5.5l10 10M10.500.5l-10 10" stroke="#111" /></Ico>
      </div>
    </div>
    <div className="h-[31px] flex items-end pl-[8px] shrink-0">
      <div className="w-[71px] h-[18px] bg-[#f0f0f0] border border-b-0 border-[#d9d9d9] flex items-center justify-center text-[#111]">推荐的图表</div>
      <div className="w-[65px] h-[23px] bg-white border border-b-0 border-[#d9d9d9] flex items-center justify-center text-[#111] -mb-px z-10">所有图表</div>
    </div>
    <div className="ml-[6px] w-[619px] h-[494px] bg-white border border-[#d9d9d9] flex items-start pt-[14px] shrink-0">
      <div className="w-[129px] h-[460px] border-r border-[#c6c6c6] shrink-0 pt-px">
        {sideItems.map((s) => (
          <div key={s.t} className={`ml-[12px] w-[105px] h-[24px] flex items-center gap-[12px] pl-[4px] ${s.active ? 'bg-[#c6c6c6] border border-[#9a9a9a] text-[#333]' : 'text-[#666]'}`}>
            {s.icon}
            <span className="whitespace-nowrap [word-spacing:1px]">{s.t}</span>
          </div>
        ))}
      </div>
      <div className="pl-[11px] pt-px">
        <ChartTiles />
        <div className="ml-[2px] mt-[6px] w-[462px] border-t border-[#c6c6c6]" />
        <div className="mt-[6px] h-[24px] leading-[24px] text-[16px] text-[#111] pl-px">簇状柱形图</div>
        <div className="mt-[5px] flex items-start">
          <PreviewOne />
          <PreviewTwo />
        </div>
      </div>
    </div>
    <div className="flex pl-[468px] pt-[4px] relative">
      <div className="w-[73px] h-[29px] bg-[#e1e1e1] border-2 border-[#0078d7] flex items-center justify-center text-[#111]">确定</div>
      <div className="ml-[11px] w-[73px] h-[29px] bg-[#e1e1e1] border border-[#adadad] flex items-center justify-center text-[#111]">取消</div>
      <div className="absolute right-[1px] bottom-[-9px]">
        <Ico w={9} h={9}>
          <path d="M6 0h2v2H6zM3 3h2v2H3zM6 3h2v2H6zM0 6h2v2H0zM3 6h2v2H3zM6 6h2v2H6z" fill="#b5b5b5" />
        </Ico>
      </div>
    </div>
  </div>
);

const Cursor = () => (
  <div className="absolute left-[827px] top-[229px]">
    <Ico w={13} h={19}>
      <path d="M.5.500v15l3.500-3 2.500 5.500 2.500-1-2.500-5.500h5z" fill="#fff" stroke="#111" />
    </Ico>
  </div>
);

const Watermark = () => (
  <div className="absolute left-[1375px] top-[977px] w-[160px] h-[51px] flex pointer-events-none">
    <svg width="46" height="44" viewBox="0 0 46 44" className="shrink-0">
      <path d="M44 4C28-1 8 6 2 22c-2 7 3 14 10 16C7 30 10 20 20 13 28 8 36 6 44 4z" fill="#62a7dc" />
      <path d="M30 13C20 12 11 19 12 26c1 5 7 7 11 4-4 0-6-2-6-5 0-5 6-10 13-12z" fill="#3f7fc4" />
      <path d="M12 38c12 6 26-2 31-14-7 7-10 9-16 10-6 2-10 3-15 4z" fill="#9fd06a" />
      <path d="M28 20c4 2 4 7 0 10-3 2-7 2-9 1 5 0 9-2 10-5 1-2 0-4-1-6z" fill="#e3d84e" />
    </svg>
    <div className="flex flex-col -ml-[2px]">
      <div className="h-[26px] leading-[26px] text-[20px] font-bold tracking-[1px] text-[#5b9bd5] whitespace-nowrap [font-family:'Noto_Sans_CJK_SC',sans-serif]">极光下载站</div>
      <div className="h-[20px] leading-[20px] text-[18px] text-[#72c07a] whitespace-nowrap [font-family:'Liberation_Sans',sans-serif]">www.xz7.com</div>
    </div>
  </div>
);

export default function App() {
  return (
    <div className="relative w-[1535px] h-[1028px] overflow-hidden flex flex-col bg-[#e6e6e6] [font-family:'Noto_Sans','Noto_Sans_CJK_SC',sans-serif]">
      <TitleBar />
      <TabBar />
      <Ribbon />
      <QuickBar />
      <FormulaBar />
      <div className="flex mt-[11px] shrink-0">
        <Sheet />
        <VScroll />
      </div>
      <SheetTabs />
      <StatusBar />
      <Dialog />
      <Cursor />
      <Watermark />
    </div>
  );
}
